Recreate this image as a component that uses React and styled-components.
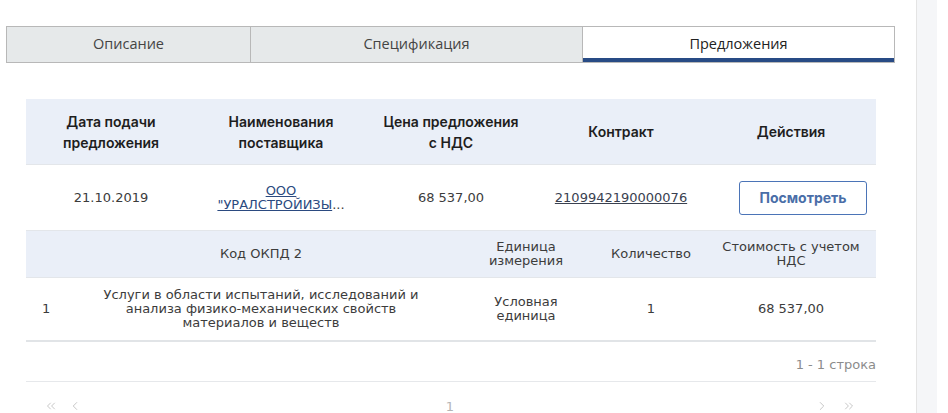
import React from 'react';
import styled, { createGlobalStyle } from 'styled-components';
import { ChevronLeft, ChevronRight, ChevronsLeft, ChevronsRight } from 'lucide-react';

const GlobalStyle = createGlobalStyle`
  html, body {
    margin: 0;
    padding: 0;
    background: #fff;
    font-family: "DejaVu Sans", sans-serif;
    overflow: hidden;
  }
`;

const Page = styled.div`
  display: flex;
  height: 413px;
`;

const Content = styled.div`
  width: 916px;
  padding: 26px 0 0 6px;
  box-sizing: border-box;
`;

const Side = styled.div`
  width: 20px;
  border-left: 1px solid #e4e4e4;
  background: #f5f6f8;
`;

const Tabs = styled.div`
  display: flex;
  width: 889px;
  height: 37px;
  border: 1px solid #b8b8b8;
  box-sizing: border-box;
`;

const Tab = styled.div`
  position: relative;
  width: ${(p) => p.$w}px;
  display: flex;
  align-items: center;
  justify-content: center;
  font-family: "Open Sans", sans-serif;
  font-size: 14.5px;
  font-weight: 500;
  color: ${(p) => (p.$active ? '#222' : '#444')};
  background: ${(p) => (p.$active ? '#fff' : '#e6e9ea')};
  border-left: ${(p) => (p.$first ? 'none' : '1px solid #b8b8b8')};
  box-sizing: border-box;
  padding-bottom: 2px;
  &::after {
    content: '';
    display: ${(p) => (p.$active ? 'block' : 'none')};
    position: absolute;
    left: 0;
    right: 0;
    bottom: 0;
    height: 4px;
    background: #284b85;
  }
`;

const TableWrap = styled.div`
  width: 850px;
  margin: 36px 0 0 20px;
`;

const Grid = styled.div`
  display: grid;
  grid-template-columns: ${(p) => p.$cols};
`;

const Cell = styled.div`
  display: flex;
  align-items: center;
  justify-content: ${(p) => (p.$left ? 'flex-start' : 'center')};
  text-align: center;
  height: ${(p) => p.$h}px;
  box-sizing: border-box;
  padding: ${(p) => (p.$left ? '0 0 0 16px' : '0 6px')};
  background: ${(p) => (p.$head ? '#eaeff8' : '#fff')};
  border-bottom: ${(p) => p.$line || '1px solid #e3e6ea'};
  font-family: ${(p) => (p.$bold ? '"Inter", sans-serif' : '"DejaVu Sans", sans-serif')};
  font-size: ${(p) => (p.$bold ? '14px' : '13px')};
  line-height: ${(p) => (p.$bold ? '21px' : '14px')};
  font-weight: ${(p) => (p.$bold ? 600 : 400)};
  color: ${(p) => (p.$bold ? '#1e1e1e' : '#3c3c3c')};
`;

const Link = styled.a`
  color: ${(p) => p.$color};
  text-decoration: underline;
  cursor: pointer;
`;

const Clamp = styled.span`
  display: inline-block;
  max-width: 145px;
  line-height: 14px;
`;

const ViewButton = styled.button`
  width: 128px;
  height: 34px;
  margin-left: 24px;
  border: 1px solid #4b74b7;
  border-radius: 3px;
  background: #fff;
  color: #4a6ea8;
  font-family: "Inter", sans-serif;
  font-size: 14px;
  font-weight: 700;
  cursor: pointer;
`;

const Footer = styled.div`
  display: flex;
  justify-content: flex-end;
  align-items: center;
  height: 40px;
  padding-top: 6px;
  box-sizing: border-box;
  border-bottom: 1px solid #e6e8eb;
  font-size: 13px;
  color: #8c8c8c;
`;

const Pager = styled.div`
  display: grid;
  grid-template-columns: 1fr auto 1fr;
  align-items: center;
  height: 48px;
  padding: 0 20px 0 18px;
  color: #b5b5b5;
  font-size: 13px;
`;

const PagerGroup = styled.div`
  display: flex;
  gap: ${(p) => (p.$end ? 13 : 10)}px;
  justify-content: ${(p) => (p.$end ? 'flex-end' : 'flex-start')};
`;

const offers = {
  date: '21.10.2019',
  price: '68 537,00',
  contract: '2109942190000076',
};

const App = () => {
  return (
    <>
      <GlobalStyle />
      <Page>
        <Content>
          <Tabs>
            <Tab $w={243} $first>Описание</Tab>
            <Tab $w={332}>Спецификация</Tab>
            <Tab $w={312} $active>Предложения</Tab>
          </Tabs>

          <TableWrap>
            <Grid $cols="repeat(5, 1fr)">
              <Cell $head $bold $h={66}>Дата подачи<br />предложения</Cell>
              <Cell $head $bold $h={66}>Наименования<br />поставщика</Cell>
              <Cell $head $bold $h={66}>Цена предложения<br />с НДС</Cell>
              <Cell $head $bold $h={66}>Контракт</Cell>
              <Cell $head $bold $h={66}>Действия</Cell>

              <Cell $h={66}>{offers.date}</Cell>
              <Cell $h={66}>
                <Clamp>
                  <Link $color="#2b4a80">ООО<br />"УРАЛСТРОЙИЗЫ</Link>...
                </Clamp>
              </Cell>
              <Cell $h={66}>{offers.price}</Cell>
              <Cell $h={66}>
                <Link $color="#3a4150">{offers.contract}</Link>
              </Cell>
              <Cell $h={66}>
                <ViewButton>Посмотреть</ViewButton>
              </Cell>
            </Grid>

            <Grid $cols="40px 390px 140px 110px 170px">
              <Cell $head $h={47} />
              <Cell $head $h={47}>Код ОКПД 2</Cell>
              <Cell $head $h={47}>Единица<br />измерения</Cell>
              <Cell $head $h={47}>Количество</Cell>
              <Cell $head $h={47}>Стоимость с учетом<br />НДС</Cell>

              <Cell $left $h={64} $line="2px solid #e1e4e7">1</Cell>
              <Cell $h={64} $line="2px solid #e1e4e7">
                Услуги в области испытаний, исследований и<br />
                анализа физико-механических свойств<br />
                материалов и веществ
              </Cell>
              <Cell $h={64} $line="2px solid #e1e4e7">Условная<br />единица</Cell>
              <Cell $h={64} $line="2px solid #e1e4e7">1</Cell>
              <Cell $h={64} $line="2px solid #e1e4e7">68 537,00</Cell>
            </Grid>

            <Footer>1 - 1 строка</Footer>

            <Pager>
              <PagerGroup>
                <ChevronsLeft size={14} strokeWidth={1.3} />
                <ChevronLeft size={14} strokeWidth={1.3} />
              </PagerGroup>
              <span>1</span>
              <PagerGroup $end>
                <ChevronRight size={14} strokeWidth={1.3} />
                <ChevronsRight size={14} strokeWidth={1.3} />
              </PagerGroup>
            </Pager>
          </TableWrap>
        </Content>
        <Side />
      </Page>
    </>
  );
};

export default App;
